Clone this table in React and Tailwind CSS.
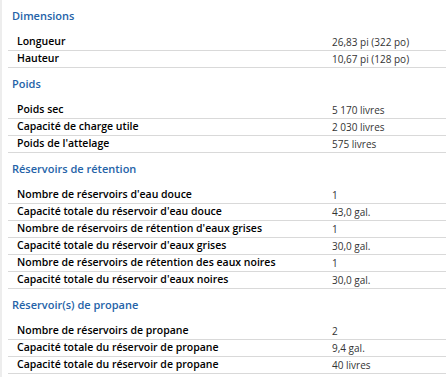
import React from "react";

const sections = [
    {
        title: "Dimensions",
        rows: [
            ["Longueur", "26,83 pi (322 po)"],
            ["Hauteur", "10,67 pi (128 po)"],
        ],
    },
    {
        title: "Poids",
        rows: [
            ["Poids sec", "5 170 livres"],
            ["Capacité de charge utile", "2 030 livres"],
            ["Poids de l'attelage", "575 livres"],
        ],
    },
    {
        title: "Réservoirs de rétention",
        rows: [
            ["Nombre de réservoirs d'eau douce", "1"],
            ["Capacité totale du réservoir d'eau douce", "43,0 gal."],
            ["Nombre de réservoirs de rétention d'eaux grises", "1"],
            ["Capacité totale du réservoir d'eaux grises", "30,0 gal."],
            ["Nombre de réservoirs de rétention des eaux noires", "1"],
            ["Capacité totale du réservoir d'eaux noires", "30,0 gal."],
        ],
    },
    {
        title: "Réservoir(s) de propane",
        rows: [
            ["Nombre de réservoirs de propane", "2"],
            ["Capacité totale du réservoir de propane", "9,4 gal."],
            ["Capacité totale du réservoir de propane", "40 livres"],
        ],
    },
];

export default function App() {
    return (
        <div
            className="w-[446px] h-[377px] overflow-hidden bg-white border-l-2 border-[#ededed]"
            style={{ fontFamily: "'Open Sans', 'Noto Sans', sans-serif" }}
        >
            {sections.map((section) => (
                <div key={section.title}>
                    <div className="h-[34px] flex items-center pb-[2px] pl-[10px] text-[11px] font-semibold text-[#2563a8]">
                        {section.title}
                    </div>
                    <div className="ml-[6px]">
                        {section.rows.map(([label, value], i) => (
                            <div key={i} className="h-[17px] flex items-center border-b border-[#d9d9d9]">
                                <div className="w-[324px] pl-[9px] text-[10.5px] font-semibold text-black whitespace-nowrap">{label}</div>
                                <div className="text-[10px] text-[#333] whitespace-nowrap">{value}</div>
                            </div>
                        ))}
                    </div>
                </div>
            ))}
        </div>
    );
}
